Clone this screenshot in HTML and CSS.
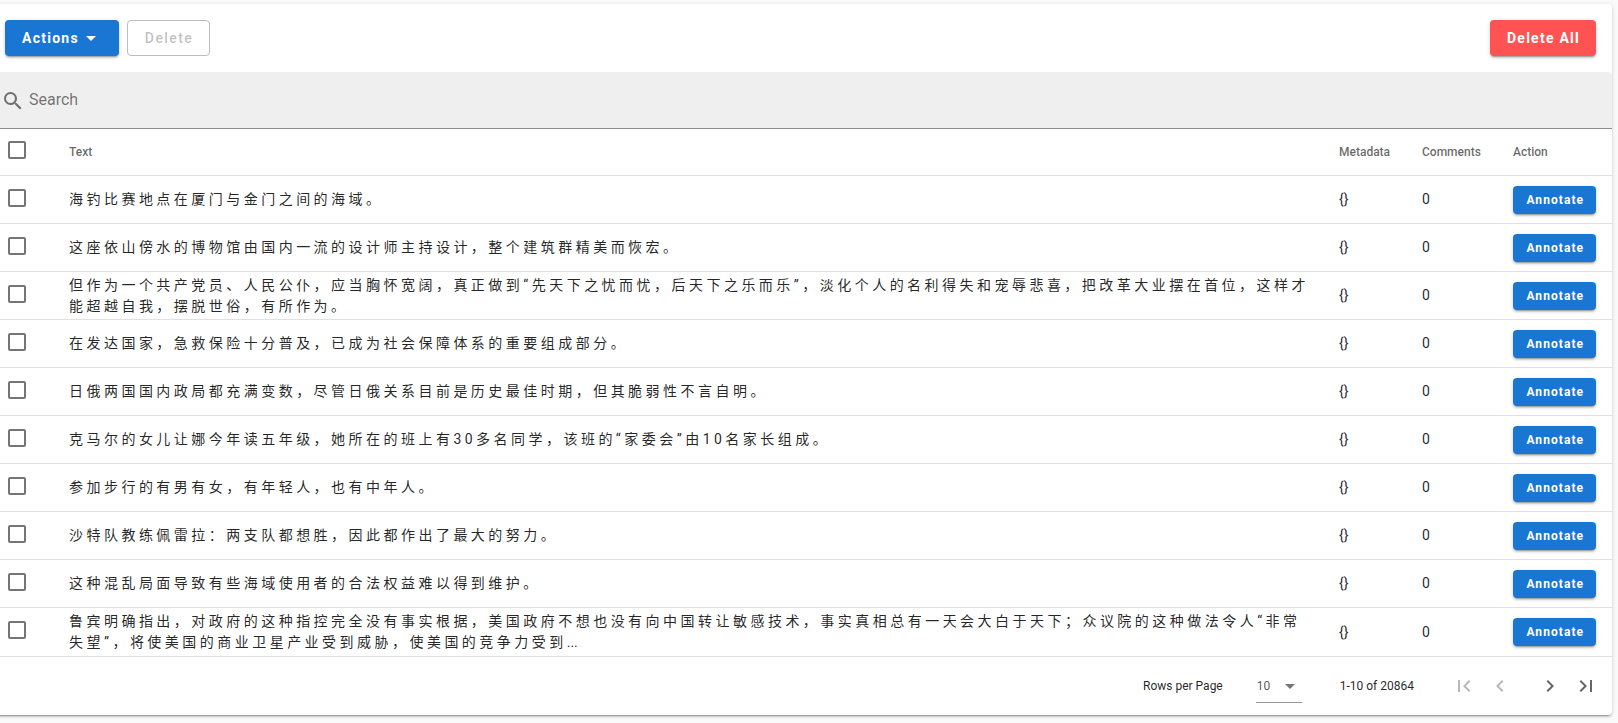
FILE: index.html
```html
<!DOCTYPE html>
<html lang="en">
<head>
    <meta charset="UTF-8">
    <meta name="viewport" content="width=device-width, initial-scale=1.0">
    <title>Dataset</title>
    <link rel="stylesheet" href="styles.css">
</head>
<body>
    <div class="card">
        <div class="card-title">
            <button class="btn btn-primary">Actions
                <svg class="icon" viewBox="0 0 24 24"><path d="M7,10L12,15L17,10H7Z"/></svg>
            </button>
            <button class="btn btn-outlined" disabled>Delete</button>
            <button class="btn btn-error">Delete All</button>
        </div>

        <div class="search">
            <svg class="icon" viewBox="0 0 24 24"><path d="M9.5,3A6.5,6.5 0 0,1 16,9.5C16,11.11 15.41,12.59 14.44,13.73L14.71,14H15.5L20.5,19L19,20.5L14,15.5V14.71L13.73,14.44C12.59,15.41 11.11,16 9.5,16A6.5,6.5 0 0,1 3,9.5A6.5,6.5 0 0,1 9.5,3M9.5,5C7,5 5,7 5,9.5C5,12 7,14 9.5,14C12,14 14,12 14,9.5C14,7 12,5 9.5,5Z"/></svg>
            <input type="text" placeholder="Search">
        </div>

        <table>
            <thead>
                <tr>
                    <th class="col-check"><input type="checkbox"></th>
                    <th>Text</th>
                    <th class="col-meta">Metadata</th>
                    <th class="col-comments">Comments</th>
                    <th class="col-action">Action</th>
                </tr>
            </thead>
            <tbody lang="zh-CN">
                <tr>
                    <td><input type="checkbox"></td>
                    <td>海 钓 比 赛 地 点 在 厦 门 与 金 门 之 间 的 海 域 。</td>
                    <td>{}</td>
                    <td>0</td>
                    <td><button class="btn btn-primary btn-small">Annotate</button></td>
                </tr>
                <tr>
                    <td><input type="checkbox"></td>
                    <td>这 座 依 山 傍 水 的 博 物 馆 由 国 内 一 流 的 设 计 师 主 持 设 计 ， 整 个 建 筑 群 精 美 而 恢 宏 。</td>
                    <td>{}</td>
                    <td>0</td>
                    <td><button class="btn btn-primary btn-small">Annotate</button></td>
                </tr>
                <tr>
                    <td><input type="checkbox"></td>
                    <td>但 作 为 一 个 共 产 党 员 、 人 民 公 仆 ， 应 当 胸 怀 宽 阔 ， 真 正 做 到 “ 先 天 下 之 忧 而 忧 ， 后 天 下 之 乐 而 乐 ” ， 淡 化 个 人 的 名 利 得 失 和 宠 辱 悲 喜 ， 把 改 革 大 业 摆 在 首 位 ， 这 样 才 能 超 越 自 我 ， 摆 脱 世 俗 ， 有 所 作 为 。</td>
                    <td>{}</td>
                    <td>0</td>
                    <td><button class="btn btn-primary btn-small">Annotate</button></td>
                </tr>
                <tr>
                    <td><input type="checkbox"></td>
                    <td>在 发 达 国 家 ， 急 救 保 险 十 分 普 及 ， 已 成 为 社 会 保 障 体 系 的 重 要 组 成 部 分 。</td>
                    <td>{}</td>
                    <td>0</td>
                    <td><button class="btn btn-primary btn-small">Annotate</button></td>
                </tr>
                <tr>
                    <td><input type="checkbox"></td>
                    <td>日 俄 两 国 国 内 政 局 都 充 满 变 数 ， 尽 管 日 俄 关 系 目 前 是 历 史 最 佳 时 期 ， 但 其 脆 弱 性 不 言 自 明 。</td>
                    <td>{}</td>
                    <td>0</td>
                    <td><button class="btn btn-primary btn-small">Annotate</button></td>
                </tr>
                <tr>
                    <td><input type="checkbox"></td>
                    <td>克 马 尔 的 女 儿 让 娜 今 年 读 五 年 级 ， 她 所 在 的 班 上 有 3 0 多 名 同 学 ， 该 班 的 “ 家 委 会 ” 由 1 0 名 家 长 组 成 。</td>
                    <td>{}</td>
                    <td>0</td>
                    <td><button class="btn btn-primary btn-small">Annotate</button></td>
                </tr>
                <tr>
                    <td><input type="checkbox"></td>
                    <td>参 加 步 行 的 有 男 有 女 ， 有 年 轻 人 ， 也 有 中 年 人 。</td>
                    <td>{}</td>
                    <td>0</td>
                    <td><button class="btn btn-primary btn-small">Annotate</button></td>
                </tr>
                <tr>
                    <td><input type="checkbox"></td>
                    <td>沙 特 队 教 练 佩 雷 拉 ： 两 支 队 都 想 胜 ， 因 此 都 作 出 了 最 大 的 努 力 。</td>
                    <td>{}</td>
                    <td>0</td>
                    <td><button class="btn btn-primary btn-small">Annotate</button></td>
                </tr>
                <tr>
                    <td><input type="checkbox"></td>
                    <td>这 种 混 乱 局 面 导 致 有 些 海 域 使 用 者 的 合 法 权 益 难 以 得 到 维 护 。</td>
                    <td>{}</td>
                    <td>0</td>
                    <td><button class="btn btn-primary btn-small">Annotate</button></td>
                </tr>
                <tr>
                    <td><input type="checkbox"></td>
                    <td>鲁 宾 明 确 指 出 ， 对 政 府 的 这 种 指 控 完 全 没 有 事 实 根 据 ， 美 国 政 府 不 想 也 没 有 向 中 国 转 让 敏 感 技 术 ， 事 实 真 相 总 有 一 天 会 大 白 于 天 下 ； 众 议 院 的 这 种 做 法 令 人 “ 非 常 失 望 ” ， 将 使 美 国 的 商 业 卫 星 产 业 受 到 威 胁 ， 使 美 国 的 竞 争 力 受 到 ...</td>
                    <td>{}</td>
                    <td>0</td>
                    <td><button class="btn btn-primary btn-small">Annotate</button></td>
                </tr>
            </tbody>
        </table>

        <div class="footer">
            <span>Rows per Page</span>
            <div class="select">
                <span>10</span>
                <svg class="icon" viewBox="0 0 24 24"><path d="M7,10L12,15L17,10H7Z"/></svg>
            </div>
            <span class="range">1-10 of 20864</span>
            <div class="pages">
                <svg class="icon disabled" viewBox="0 0 24 24"><path d="M18.41,16.59L13.82,12L18.41,7.41L17,6L11,12L17,18L18.41,16.59M6,6H8V18H6V6Z"/></svg>
                <svg class="icon disabled" viewBox="0 0 24 24"><path d="M15.41,16.58L10.83,12L15.41,7.41L14,6L8,12L14,18L15.41,16.58Z"/></svg>
                <svg class="icon next" viewBox="0 0 24 24"><path d="M8.59,16.58L13.17,12L8.59,7.41L10,6L16,12L10,18L8.59,16.58Z"/></svg>
                <svg class="icon" viewBox="0 0 24 24"><path d="M5.59,7.41L10.18,12L5.59,16.59L7,18L13,12L7,6L5.59,7.41M16,6H18V18H16V6Z"/></svg>
            </div>
        </div>
    </div>
</body>
</html>
```
FILE: styles.css
```css
* {
    box-sizing: border-box;
}

body {
    min-height: 100vh;
    margin: 0;
    padding-top: 4px;
    background-color: #fafafa;
    color: rgba(0, 0, 0, 0.87);
    font-family: Roboto, "Noto Sans CJK SC", sans-serif;
    font-size: 14px;
    line-height: 21px;
    overflow: hidden;
}

.card {
    margin: 0 6px 0 -11px;
    background-color: #fff;
    border-radius: 4px;
    box-shadow: 0 3px 1px -2px rgba(0, 0, 0, 0.2), 0 2px 2px 0 rgba(0, 0, 0, 0.14), 0 1px 5px 0 rgba(0, 0, 0, 0.12);
}

.card-title {
    display: flex;
    gap: 8px;
    padding: 16px;
}

.icon {
    width: 24px;
    height: 24px;
    flex: none;
    fill: currentColor;
}

/* Buttons */
.btn {
    display: inline-flex;
    align-items: center;
    height: 36px;
    padding: 0 16px 0 17px;
    border: none;
    border-radius: 4px;
    color: #fff;
    font-family: inherit;
    font-size: 14px;
    font-weight: bold;
    letter-spacing: 1.25px;
    white-space: nowrap;
    box-shadow: 0 3px 1px -2px rgba(0, 0, 0, 0.2), 0 2px 2px 0 rgba(0, 0, 0, 0.14), 0 1px 5px 0 rgba(0, 0, 0, 0.12);
}

.btn-primary {
    background-color: #1976d2;
}

.btn-error {
    margin-left: auto;
    background-color: #ff5252;
}

.btn-outlined {
    padding: 0 16px 0 17px;
    border: 1px solid #bdbdbd;
    background-color: #fff;
    color: rgba(0, 0, 0, 0.26);
    font-weight: 500;
    letter-spacing: 1.4px;
    box-shadow: none;
}

.btn-small {
    height: 28px;
    padding: 0 12.4px 0 13.4px;
    font-size: 12px;
    letter-spacing: 1.07px;
}

/* Search bar */
.search {
    display: flex;
    align-items: center;
    height: 57px;
    padding: 0 12px;
    background-color: #efefef;
    border-bottom: 1px solid #8d8d8d;
    border-radius: 4px 4px 0 0;
    color: rgba(0, 0, 0, 0.54);
}

.search input {
    flex: 1;
    padding: 0 0 2px 4px;
    border: none;
    outline: none;
    background: none;
    font-family: inherit;
    font-size: 16px;
}

.search input::placeholder {
    color: rgba(0, 0, 0, 0.54);
}

.search .icon {
    margin-top: 2px;
}

/* Table */
table {
    width: 100%;
    table-layout: fixed;
    border-collapse: separate;
    border-spacing: 0;
}

th, td {
    height: 48px;
    padding: 0 16px;
    border-bottom: 1px solid #e0e0e0;
    text-align: left;
}

th {
    height: 47px;
    color: rgba(0, 0, 0, 0.6);
    font-size: 12px;
    font-weight: 500;
}

tbody tr:last-child td {
    border-bottom: none;
}

td .btn {
    vertical-align: middle;
}

.col-check {
    width: 64px;
}

.col-meta {
    width: 83px;
}

.col-comments {
    width: 91px;
}

.col-action {
    width: 115px;
}

input[type="checkbox"] {
    display: block;
    appearance: none;
    width: 18px;
    height: 18px;
    margin: 0 3px 3px;
    border: 2px solid #757575;
    border-radius: 2px;
}

th input[type="checkbox"],
tr:last-child td input[type="checkbox"] {
    margin-bottom: 4px;
}

/* Footer */
.footer {
    display: flex;
    align-items: center;
    justify-content: flex-end;
    height: 59px;
    padding-right: 14px;
    border-top: 1px solid #e0e0e0;
    font-size: 12px;
}

.select {
    display: flex;
    align-items: center;
    justify-content: space-between;
    width: 46px;
    height: 33px;
    margin: 0 38px 0 33px;
    border-bottom: 1px solid #949494;
    color: rgba(0, 0, 0, 0.7);
}

.select span {
    padding: 1px 0 0 1px;
}

.select .icon {
    color: rgba(0, 0, 0, 0.54);
}

.pages {
    display: flex;
    gap: 12px;
    margin-left: 38px;
    color: rgba(0, 0, 0, 0.6);
}

.pages .disabled {
    color: rgba(0, 0, 0, 0.28);
}

.pages .next {
    margin-left: 14px;
}
```
